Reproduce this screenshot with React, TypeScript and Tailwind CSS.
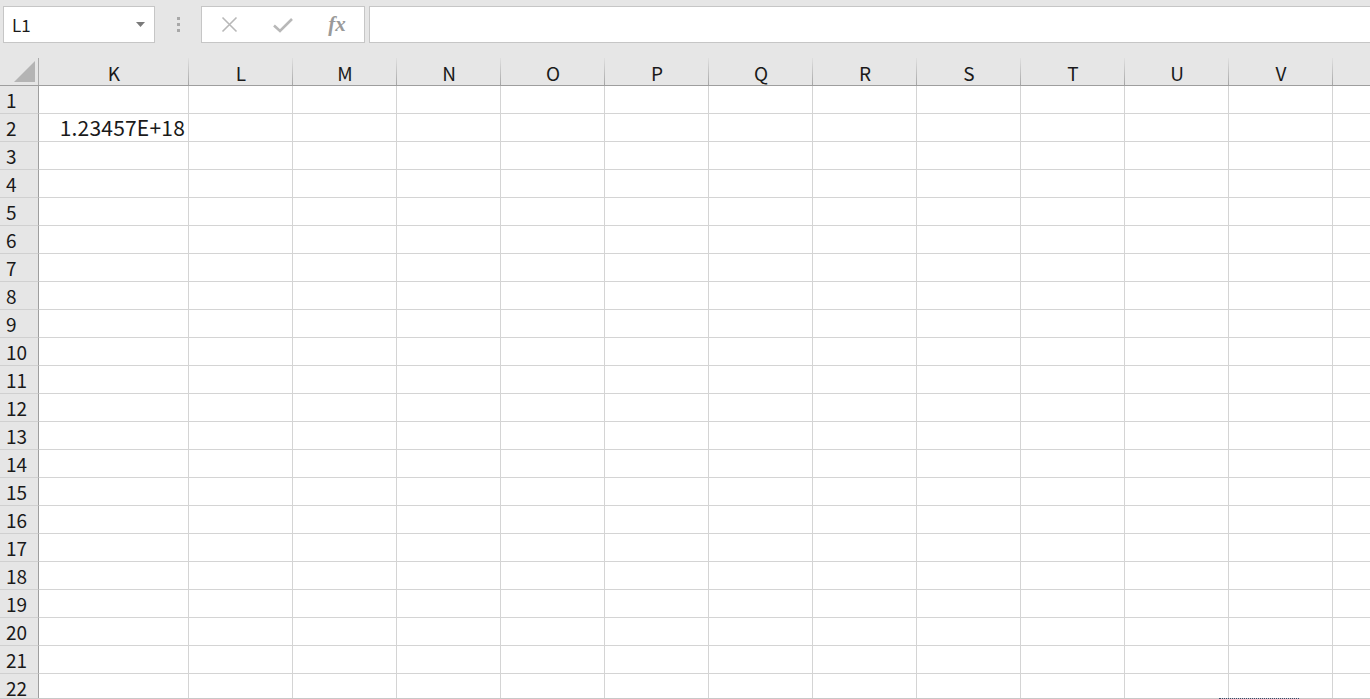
import React from "react";

const cols = ["K", "L", "M", "N", "O", "P", "Q", "R", "S", "T", "U", "V", ""];
const widths = [150, 104, 104, 104, 104, 104, 104, 104, 104, 104, 104, 104, 104];
const rows = Array.from({ length: 22 }, (_, i) => i + 1);

export default function App() {
  return (
    <div
      className="w-[1370px] h-[699px] overflow-hidden bg-[#e6e6e6] flex flex-col text-[#1a1a1a]"
      style={{ fontFamily: '"Noto Sans CJK SC", "Liberation Sans", sans-serif' }}
    >
      {/* formula bar */}
      <div className="h-[58px] shrink-0 flex items-start pt-[6px] pl-[3px]">
        <div className="w-[152px] h-[37px] bg-white border border-[#c6c6c6] flex items-center pl-[8px] pr-[8px]">
          <span className="text-[17px] leading-none flex-1">L1</span>
          <svg width="9" height="5" viewBox="0 0 9 5" className="mr-[1px]">
            <path d="M0 0 L9 0 L4.5 5 Z" fill="#7a7a7a" />
          </svg>
        </div>
        <div className="w-[46px] h-[37px] flex flex-col items-center justify-center gap-[3px]">
          <div className="w-[3px] h-[3px] bg-[#a8a8a8]" />
          <div className="w-[3px] h-[3px] bg-[#a8a8a8]" />
          <div className="w-[3px] h-[3px] bg-[#a8a8a8]" />
        </div>
        <div className="w-[164px] h-[37px] bg-white border border-[#c6c6c6] flex items-center">
          <div className="w-[54px] flex justify-center pl-[1px]">
            <svg width="17" height="17" viewBox="0 0 17 17">
              <path d="M1.5 1.5 L15.5 15.5 M15.5 1.5 L1.5 15.5" stroke="#b8b8b8" strokeWidth="1.6" />
            </svg>
          </div>
          <div className="w-[54px] flex justify-center">
            <svg width="20" height="16" viewBox="0 0 20 16">
              <path d="M1 8.5 L7 14 L19 2" stroke="#b8b8b8" strokeWidth="2.6" fill="none" />
            </svg>
          </div>
          <div className="w-[54px] flex justify-center">
            <span
              className="text-[21px] leading-none italic font-bold text-[#9a9a9a]"
              style={{ fontFamily: '"Liberation Serif", serif' }}
            >
              fx
            </span>
          </div>
        </div>
        <div className="ml-[4px] flex-1 h-[37px] bg-white border border-[#c6c6c6] border-r-0" />
      </div>

      {/* column header */}
      <div className="h-[28px] shrink-0 flex border-b border-[#9e9e9e]">
        <div className="w-[39px] shrink-0 border-r border-[#ababab] flex items-end justify-end pr-[3px] pb-[3px] bg-[#e6e6e6]">
          <svg width="21" height="21" viewBox="0 0 21 21">
            <path d="M21 0 L21 21 L0 21 Z" fill="#b4b4b4" />
          </svg>
        </div>
        {cols.map((c, i) => (
          <div
            key={i}
            className="shrink-0 relative flex items-center justify-center text-[19px] leading-none pt-[1px]"
            style={{ width: widths[i] }}
          >
            {c}
            <div className="absolute right-0 top-0 bottom-0 w-px bg-gradient-to-b from-[#e0e0e0] to-[#a6a6a6]" />
          </div>
        ))}
      </div>

      {/* grid */}
      <div className="flex-1 overflow-hidden bg-white">
        {rows.map((r) => (
          <div key={r} className="h-[28px] flex">
            <div className="w-[39px] shrink-0 bg-[#e6e6e6] border-r border-[#9e9e9e] border-b border-b-[#d0d0d0] flex items-center pl-[6px] text-[19px] leading-none">
              {r}
            </div>
            {cols.map((_, i) => (
              <div
                key={i}
                className="shrink-0 border-r border-b border-[#d4d4d4] flex items-center justify-end pr-[3px] text-[21px] tracking-[0.2px] leading-none"
                style={{ width: widths[i] }}
              >
                {r === 2 && i === 0 ? "1.23457E+18" : ""}
              </div>
            ))}
          </div>
        ))}
      </div>
      <div className="h-px shrink-0 bg-[#c8c8c8] flex">
        <div className="ml-[1219px] w-[80px] h-px border-t border-dotted border-[#3a4a6a]" />
      </div>
    </div>
  );
}
